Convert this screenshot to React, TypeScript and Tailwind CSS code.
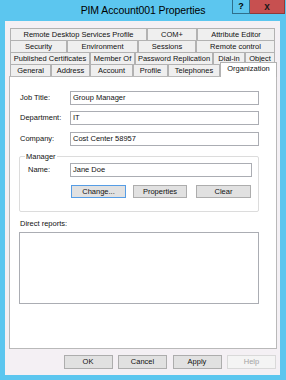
const tabRows: { label: string; w: string }[][] = [
  [
    { label: 'Remote Desktop Services Profile', w: 'w-[137px]' },
    { label: 'COM+', w: 'w-[50px]' },
    { label: 'Attribute Editor', w: 'w-[78px]' },
  ],
  [
    { label: 'Security', w: 'w-[57px]' },
    { label: 'Environment', w: 'w-[71px]' },
    { label: 'Sessions', w: 'w-[58px]' },
    { label: 'Remote control', w: 'w-[79px]' },
  ],
  [
    { label: 'Published Certificates', w: 'w-[80px]' },
    { label: 'Member Of', w: 'w-[45px]' },
    { label: 'Password Replication', w: 'w-[78px]' },
    { label: 'Dial-in', w: 'w-[32px]' },
    { label: 'Object', w: 'w-[30px]' },
  ],
  [
    { label: 'General', w: 'w-[41px]' },
    { label: 'Address', w: 'w-[39px]' },
    { label: 'Account', w: 'w-[43px]' },
    { label: 'Profile', w: 'w-[35px]' },
    { label: 'Telephones', w: 'w-[52px]' },
  ],
]

const Tab = ({ label, w }: { label: string; w: string }) => (
  <div
    className={`${w} h-[12px] shrink-0 border-l border-t border-r border-[#b2b2b2] bg-[#efefef] flex items-center justify-center leading-none whitespace-nowrap`}
  >
    {label}
  </div>
)

const Field = ({ label, value, top }: { label: string; value: string; top: string }) => (
  <div className={`flex items-center ${top}`}>
    <span className="w-[50px] shrink-0">{label}</span>
    <div className="w-[189px] h-[14px] border border-[#abadb3] bg-white flex items-center px-[2px]">{value}</div>
  </div>
)

const Btn = ({ label, extra }: { label: string; extra: string }) => (
  <button className={`w-full h-[13px] border flex items-center justify-center leading-none ${extra}`}>{label}</button>
)

export default function App() {
  return (
    <div className="w-[286px] h-[380px] bg-[#5cc6ef] flex flex-col font-['Liberation_Sans',Arial,sans-serif] text-[7.5px] text-[#111]">
      <div className="relative h-[21px] shrink-0 flex items-center justify-center">
        <span className="text-[10.5px] text-black tracking-[-0.1px] pt-[1px]">PIM Account001 Properties</span>
        <div className="absolute top-0 right-[1px] flex">
          <div className="w-[18px] h-[14px] border-l border-r border-b border-[#2f6f8c] flex items-center justify-center text-[9px] font-bold text-black">
            ?
          </div>
          <div className="w-[35px] h-[14px] bg-[#c75050] border-b border-r border-[#8e3a3a] flex items-center justify-center text-[10px] font-bold text-[#1a1a1a]">
            x
          </div>
        </div>
      </div>

      <div className="ml-[5px] mr-[6px] mb-[5px] flex-1 bg-[#f4f0f4] flex flex-col">
        <div className="pt-[7px] pl-[5px] flex flex-col">
          {tabRows.map((row, i) => (
            <div key={i} className="flex items-end h-[12px]">
              {row.map((t) => (
                <Tab key={t.label} label={t.label} w={t.w} />
              ))}
              {i === 3 && (
                <div className="relative z-10 w-[57px] h-[15px] -mb-px shrink-0 border-l border-t border-r border-[#b2b2b2] bg-white flex items-center justify-center leading-none pb-[2px]">
                  Organization
                </div>
              )}
            </div>
          ))}
        </div>

        <div className="ml-[4px] w-[268px] h-[273px] bg-white border border-[#b9b9b9] pl-[10px] pt-[14px] flex flex-col">
          <Field label="Job Title:" value="Group Manager" top="" />
          <Field label="Department:" value="IT" top="mt-[6px]" />
          <Field label="Company:" value="Cost Center 58957" top="mt-[7px]" />

          <div className="mt-[10px] ml-[-1px] w-[240px] h-[56px] border border-[#dcdcdc] rounded-[2px] flex flex-col">
            <span className="-mt-[5px] ml-[5px] px-[1px] bg-white w-fit leading-[9px]">Manager</span>
            <div className="flex items-center mt-[2px] pl-[8px]">
              <span className="w-[42px] shrink-0">Name:</span>
              <div className="w-[182px] h-[14px] border border-[#abadb3] flex items-center px-[2px]">Jane Doe</div>
            </div>
            <div className="flex mt-[8px] pl-[51px] gap-[7px]">
              <div className="w-[55px]">
                <Btn label="Change..." extra="border-[#569de5] bg-[#e1e1e1]" />
              </div>
              <div className="w-[54px]">
                <Btn label="Properties" extra="border-[#adadad] bg-[#e1e1e1]" />
              </div>
              <div className="w-[55px] ml-[2px]">
                <Btn label="Clear" extra="border-[#adadad] bg-[#e1e1e1]" />
              </div>
            </div>
          </div>

          <span className="mt-[7px] leading-[9px]">Direct reports:</span>
          <div className="mt-[4px] ml-[-1px] w-[240px] h-[72px] border border-[#abadb3]" />
        </div>

        <div className="flex justify-end gap-[5.5px] mt-[6px] pr-[4px]">
          <button className="w-[49px] h-[14px] border border-[#adadad] bg-[#e1e1e1] leading-none">OK</button>
          <button className="w-[49px] h-[14px] border border-[#adadad] bg-[#e1e1e1] leading-none">Cancel</button>
          <button className="w-[49px] h-[14px] border border-[#adadad] bg-[#e1e1e1] leading-none">Apply</button>
          <button className="w-[49px] h-[14px] border border-[#d9d9d9] bg-[#f4f4f4] text-[#a3a3a3] leading-none">Help</button>
        </div>
      </div>
    </div>
  )
}
